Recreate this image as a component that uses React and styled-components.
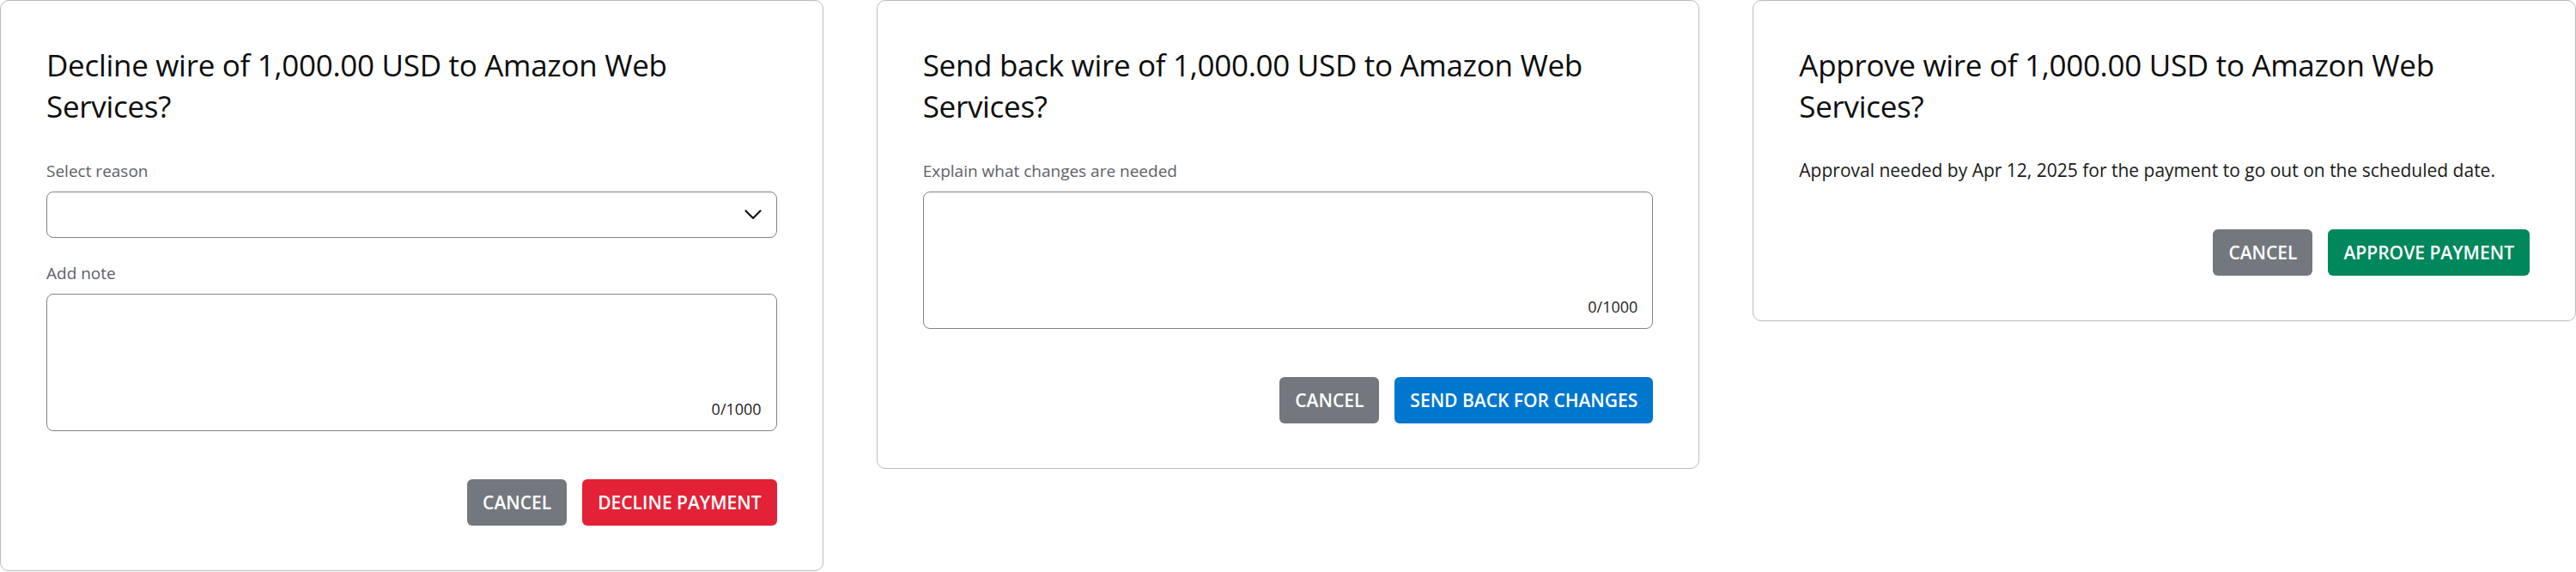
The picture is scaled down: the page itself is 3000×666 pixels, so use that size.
import React from "react";
import styled, { createGlobalStyle } from "styled-components";

const GlobalStyle = createGlobalStyle`
  html, body { margin: 0; padding: 0; background: #ffffff; }
  body { font-family: "Open Sans", "Noto Sans", sans-serif; color: #111; }
  * { box-sizing: border-box; }
`;

const Page = styled.div`
  display: grid;
  grid-template-columns: repeat(3, 1fr);
  column-gap: 62px;
  align-items: start;
  width: 3000px;
`;

const Card = styled.section`
  display: flex;
  flex-direction: column;
  border: 1px solid #bcbcbc;
  border-radius: 10px;
  padding: 51px 53px 52px 53px;
  background: #fff;
`;

const Title = styled.h2`
  margin: 0 0 38px 0;
  font-size: 35px;
  line-height: 48px;
  font-weight: 400;
  letter-spacing: -0.3px;
  color: #0d0d0d;
`;

const Field = styled.div`
  display: flex;
  flex-direction: column;
  gap: 11px;
  & + & { margin-top: 28px; }
`;

const Label = styled.label`
  font-size: 19px;
  line-height: 26px;
  color: #5d6167;
`;

const SelectBox = styled.div`
  height: 54px;
  border: 1px solid #7f8389;
  border-radius: 8px;
  display: flex;
  align-items: center;
  justify-content: flex-end;
  padding-right: 17px;
`;

const TextBox = styled.div`
  position: relative;
  height: 160px;
  border: 1px solid #7f8389;
  border-radius: 8px;
`;

const TextInput = styled.textarea`
  display: block;
  width: 100%;
  height: 100%;
  border: none;
  outline: none;
  resize: none;
  background: transparent;
  border-radius: 8px;
  padding: 14px 17px;
  font-family: inherit;
  font-size: 18px;
`;

const Counter = styled.span`
  position: absolute;
  right: 17px;
  bottom: 13px;
  font-size: 18px;
  line-height: 24px;
  color: #1d1d1d;
`;

const Body = styled.p`
  margin: 0;
  font-size: 21px;
  line-height: 25px;
  color: #1a1a1a;
`;

const Actions = styled.div`
  display: flex;
  justify-content: flex-end;
  gap: 18px;
  margin-top: 56px;
`;

const COLORS = {
  neutral: "#73787e",
  danger: "#e32237",
  primary: "#0077cf",
  success: "#00875b",
};

const Button = styled.button`
  height: 54px;
  padding: 0 18px;
  border: none;
  border-radius: 6px;
  background: ${(p) => COLORS[p.$variant] || COLORS.neutral};
  color: #fff;
  font-family: "Open Sans", "Noto Sans", sans-serif;
  font-size: 21px;
  font-weight: 600;
  text-transform: uppercase;
  cursor: pointer;
`;

const Chevron = () => (
  <svg width="20" height="12" viewBox="0 0 20 12" fill="none" aria-hidden="true">
    <polyline points="1.5,1.5 10,10 18.5,1.5" stroke="#111" strokeWidth="2.2" strokeLinecap="round" strokeLinejoin="round" />
  </svg>
);

const NoteField = ({ label }) => (
  <Field>
    <Label>{label}</Label>
    <TextBox>
      <TextInput aria-label={label} />
      <Counter>0/1000</Counter>
    </TextBox>
  </Field>
);

export default function App() {
  return (
    <>
      <GlobalStyle />
      <Page>
        <Card>
          <Title>Decline wire of 1,000.00 USD to Amazon Web Services?</Title>
          <Field>
            <Label>Select reason</Label>
            <SelectBox role="combobox">
              <Chevron />
            </SelectBox>
          </Field>
          <NoteField label="Add note" />
          <Actions>
            <Button $variant="neutral">Cancel</Button>
            <Button $variant="danger">Decline payment</Button>
          </Actions>
        </Card>

        <Card>
          <Title>Send back wire of 1,000.00 USD to Amazon Web Services?</Title>
          <NoteField label="Explain what changes are needed" />
          <Actions>
            <Button $variant="neutral">Cancel</Button>
            <Button $variant="primary">Send back for changes</Button>
          </Actions>
        </Card>

        <Card>
          <Title>Approve wire of 1,000.00 USD to Amazon Web Services?</Title>
          <Body>Approval needed by Apr 12, 2025 for the payment to go out on the scheduled date.</Body>
          <Actions>
            <Button $variant="neutral">Cancel</Button>
            <Button $variant="success">Approve payment</Button>
          </Actions>
        </Card>
      </Page>
    </>
  );
}
